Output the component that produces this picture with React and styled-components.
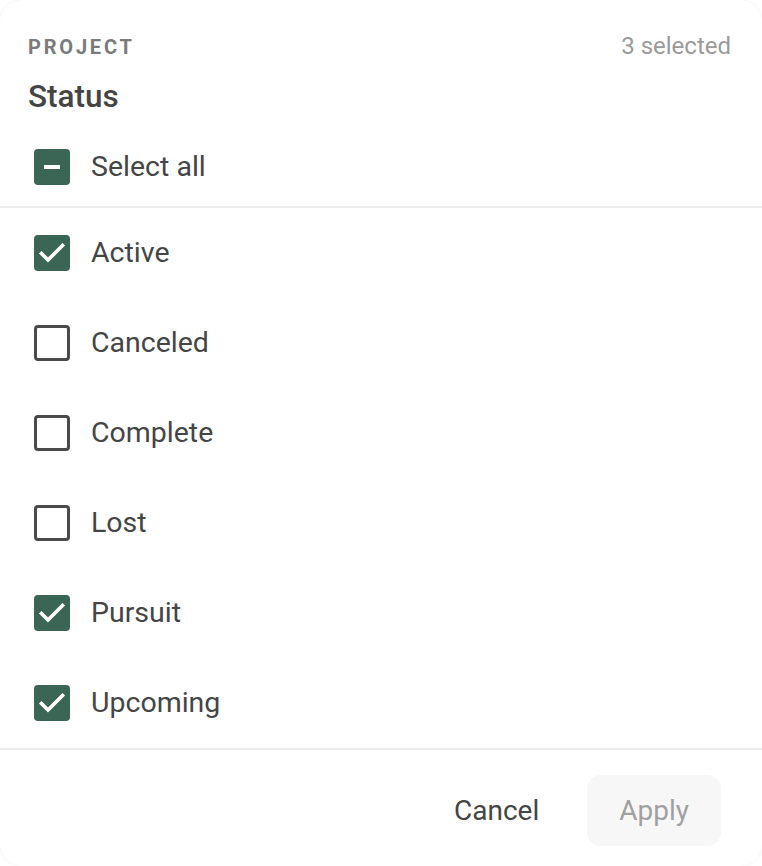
import React, { useState } from "react";
import styled, { createGlobalStyle } from "styled-components";

const Global = createGlobalStyle`
  html, body { margin: 0; padding: 0; background: #ffffff; }
  body { font-family: Roboto, "Liberation Sans", Arial, sans-serif; -webkit-font-smoothing: antialiased; }
  * { box-sizing: border-box; }
`;

const Card = styled.div`
  width: 762px;
  height: 866px;
  background: #ffffff;
  border-radius: 22px;
  box-shadow: 0 0 3px rgba(0, 0, 0, 0.07);
  display: flex;
  flex-direction: column;
  overflow: hidden;
`;

const Header = styled.div`
  padding: 30px 31px 0 28px;
`;

const TopRow = styled.div`
  display: flex;
  align-items: baseline;
  justify-content: space-between;
  line-height: 32px;
`;

const Eyebrow = styled.span`
  font-size: 20px;
  font-weight: 700;
  letter-spacing: 2.8px;
  color: #7a7a7a;
`;

const Count = styled.span`
  font-size: 24px;
  color: #9a9a9a;
`;

const Title = styled.h2`
  margin: 16px 0 12px;
  font-size: 31.5px;
  line-height: 36px;
  font-weight: 500;
  color: #454545;
`;

const Row = styled.label`
  display: flex;
  align-items: center;
  gap: 21px;
  height: ${(p) => (p.$compact ? "79px" : "90px")};
  padding-left: 34px;
  cursor: pointer;
`;

const Box = styled.span`
  width: 36px;
  height: 36px;
  border-radius: 4px;
  flex: none;
  display: flex;
  align-items: center;
  justify-content: center;
  background: ${(p) => (p.$on ? "#3b6555" : "#ffffff")};
  border: ${(p) => (p.$on ? "none" : "3.5px solid #4a4a4a")};
`;

const Label = styled.span`
  font-size: 28.5px;
  line-height: 34px;
  color: #454545;
`;

const Divider = styled.div`
  height: 2px;
  background: #ececec;
  flex: none;
`;

const List = styled.div`
  display: flex;
  flex-direction: column;
`;

const Footer = styled.div`
  display: flex;
  justify-content: flex-end;
  gap: 16px;
  padding: 25px 41px 0 0;
`;

const Button = styled.button`
  height: 71px;
  padding: 0 32px;
  border: none;
  border-radius: 14px;
  font-family: inherit;
  font-size: 28px;
  background: ${(p) => (p.$primary ? "#f7f7f7" : "transparent")};
  color: ${(p) => (p.$primary ? "#a0a0a0" : "#454545")};
  cursor: pointer;
`;

const Check = () => (
  <svg width="36" height="36" viewBox="0 0 36 36">
    <path d="M7.5 18.5 L14 25 L28.5 10.5" fill="none" stroke="#fff" strokeWidth="3.6" strokeLinecap="square" />
  </svg>
);

const Minus = () => (
  <svg width="36" height="36" viewBox="0 0 36 36">
    <rect x="10" y="16" width="16" height="4" fill="#fff" />
  </svg>
);

const items = ["Active", "Canceled", "Complete", "Lost", "Pursuit", "Upcoming"];

export default function App() {
  const [sel] = useState({ Active: true, Pursuit: true, Upcoming: true });
  return (
    <>
      <Global />
      <Card>
        <Header>
          <TopRow>
            <Eyebrow>PROJECT</Eyebrow>
            <Count>3 selected</Count>
          </TopRow>
          <Title>Status</Title>
        </Header>
        <Row $compact>
          <Box $on>
            <Minus />
          </Box>
          <Label>Select all</Label>
        </Row>
        <Divider />
        <List>
          {items.map((it) => (
            <Row key={it}>
              <Box $on={!!sel[it]}>{sel[it] && <Check />}</Box>
              <Label>{it}</Label>
            </Row>
          ))}
        </List>
        <Divider />
        <Footer>
          <Button>Cancel</Button>
          <Button $primary>Apply</Button>
        </Footer>
      </Card>
    </>
  );
}
